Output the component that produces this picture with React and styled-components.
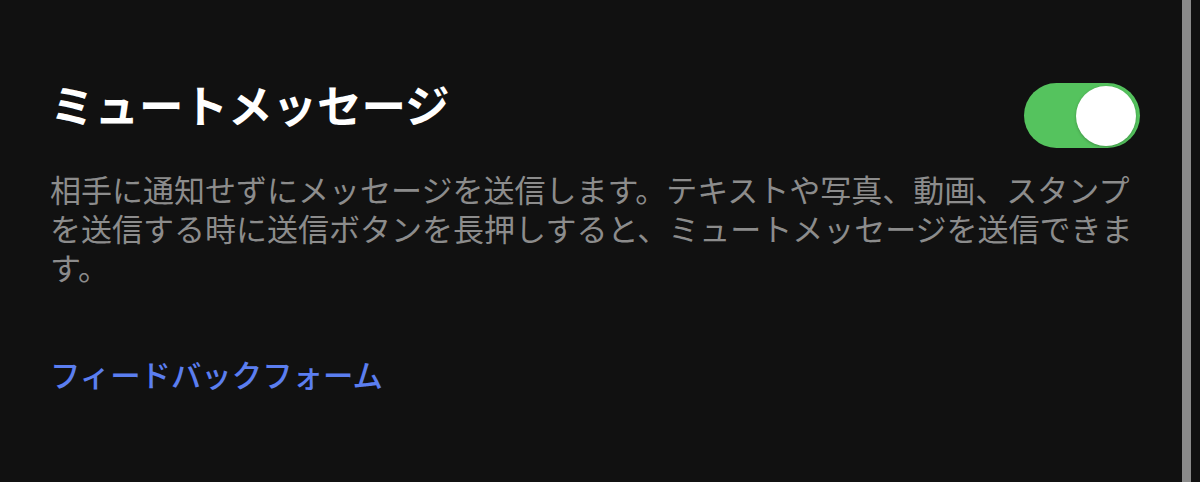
import React from "react";
import styled, { createGlobalStyle } from "styled-components";

const Global = createGlobalStyle`
  html, body { margin: 0; padding: 0; background: #111111; overflow: hidden; }
  #root { height: 482px; }
`;

const Page = styled.div`
  display: flex;
  width: 1200px;
  height: 482px;
  background: #111111;
  font-family: "Noto Sans CJK JP", "Noto Sans", sans-serif;
  overflow: hidden;
`;

const Content = styled.div`
  flex: 1;
  padding: 82px 42px 0 50px;
  display: flex;
  flex-direction: column;
`;

const Scrollbar = styled.div`
  flex: 0 0 9px;
  margin-right: 9px;
  background: #8a8a8a;
`;

const HeaderRow = styled.div`
  display: flex;
  justify-content: space-between;
  align-items: flex-start;
`;

const Title = styled.h1`
  margin: 0;
  color: #ffffff;
  font-size: 44.5px;
  line-height: 44px;
  font-weight: 700;
  letter-spacing: 0;
`;

const Toggle = styled.div`
  width: 116px;
  height: 65px;
  border-radius: 33px;
  background: #55c35e;
  display: flex;
  align-items: center;
  justify-content: ${(p) => (p.$on ? "flex-end" : "flex-start")};
  padding: 0 4px;
  box-sizing: border-box;
  margin-top: 1px;
`;

const Knob = styled.div`
  width: 60px;
  height: 60px;
  border-radius: 50%;
  background: #ffffff;
  box-shadow: 0 1px 3px rgba(0, 0, 0, 0.25);
`;

const Description = styled.p`
  margin: 21px 0 0;
  color: #8c8c8c;
  font-size: 31px;
  line-height: 39px;
  font-weight: 400;
`;

const Link = styled.a`
  margin-top: 68px;
  color: #5b7ef0;
  font-size: 30.4px;
  line-height: 40px;
  font-weight: 500;
  text-decoration: none;
`;

export default function App() {
  return (
    <>
      <Global />
      <Page>
        <Content>
          <HeaderRow>
            <Title>ミュートメッセージ</Title>
            <Toggle $on>
              <Knob />
            </Toggle>
          </HeaderRow>
          <Description>
            相手に通知せずにメッセージを送信します。テキストや写真、動画、スタンプを送信する時に送信ボタンを長押しすると、ミュートメッセージを送信できます。
          </Description>
          <Link href="#">フィードバックフォーム</Link>
        </Content>
        <Scrollbar />
      </Page>
    </>
  );
}
